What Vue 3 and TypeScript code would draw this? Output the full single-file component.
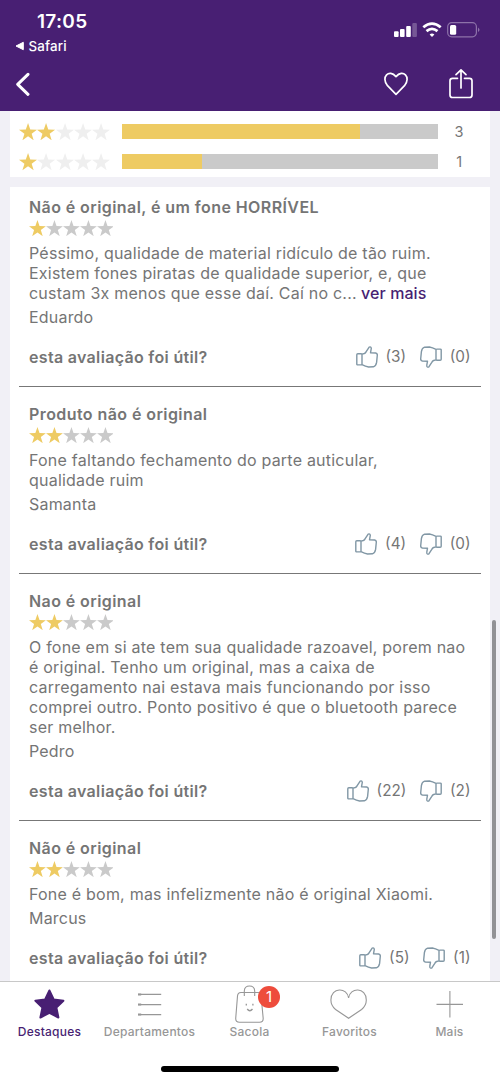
<script setup lang="ts">
interface Review {
  title: string
  stars: number
  lines: string[]
  more?: boolean
  author: string
  up: number
  down: number
}

const summary = [
  { stars: 2, percent: 75.2, count: 3 },
  { stars: 1, percent: 25.2, count: 1 },
]

const reviews: Review[] = [
  {
    title: 'Não é original, é um fone HORRÍVEL',
    stars: 1,
    lines: [
      'Péssimo, qualidade de material ridículo de tão ruim.',
      'Existem fones piratas de qualidade superior, e, que',
      'custam 3x menos que esse daí. Caí no c...',
    ],
    more: true,
    author: 'Eduardo',
    up: 3,
    down: 0,
  },
  {
    title: 'Produto não é original',
    stars: 2,
    lines: ['Fone faltando fechamento do parte auticular,', 'qualidade ruim'],
    author: 'Samanta',
    up: 4,
    down: 0,
  },
  {
    title: 'Nao é original',
    stars: 2,
    lines: [
      'O fone em si ate tem sua qualidade razoavel, porem nao',
      'é original. Tenho um original, mas a caixa de',
      'carregamento nai estava mais funcionando por isso',
      'comprei outro. Ponto positivo é que o bluetooth parece',
      'ser melhor.',
    ],
    author: 'Pedro',
    up: 22,
    down: 2,
  },
  {
    title: 'Não é original',
    stars: 2,
    lines: ['Fone é bom, mas infelizmente não é original Xiaomi.'],
    author: 'Marcus',
    up: 5,
    down: 1,
  },
]

const starPoints = '9,0 11.2,6.5 18,6.6 12.6,10.7 14.6,17.2 9,13.3 3.4,17.2 5.4,10.7 0,6.6 6.8,6.5'
const thumbPath =
  'M6 8.1 L8.3 7.5 Q9.5 7 10.2 5.6 L13 1.3 Q13.7 .5 14.8 1.2 Q15.5 1.7 15.2 2.8 L14.5 6.8 L19.7 7 Q21.5 7.3 21.3 9.3 L20.6 16.4 Q20.1 20 17.4 20.8 L12.6 21 Q9.5 20.5 6 18.6 M1.8 7.8 H5.2 Q6 7.8 6 8.7 V18 Q6 18.9 5.2 18.9 H1.8 Q.8 18.9 .8 18 V8.7 Q.8 7.8 1.8 7.8 Z'
</script>

<template>
  <div class="screen">
    <header class="header">
      <div class="status">
        <div class="clock">
          <div class="time">17:05</div>
          <div class="back-app">
            <svg width="9" height="10" viewBox="0 0 9 10"><path d="M1 5 L8.3 1.3 V8.7 Z" fill="#fff" stroke="#fff" stroke-linejoin="round" /></svg>
            <span>Safari</span>
          </div>
        </div>
        <svg class="signals" width="88" height="18" viewBox="0 0 88 18">
          <g fill="#fff">
            <rect x="1" y="9.3" width="4.6" height="5.7" rx="1" />
            <rect x="7" y="7" width="4.6" height="8" rx="1" />
            <rect x="13.2" y="4" width="4.6" height="11" rx="1" />
            <rect x="19.3" y="1" width="4.6" height="14" rx="1" opacity=".25" />
            <path d="M39 15 L36.6 12.4 Q39 10.4 41.4 12.4 Z" />
          </g>
          <path d="M30.3 5.3 Q39 -2 47.7 5.3 M33.5 9.1 Q39 4.6 44.5 9.1" fill="none" stroke="#fff" stroke-width="2.8" />
          <rect x="54.7" y=".7" width="28.7" height="14.1" rx="4" fill="none" stroke="#8d72a9" stroke-width="1.2" />
          <rect x="57" y="3" width="6.2" height="9.8" rx="1.5" fill="#fff" />
          <path d="M85 5.5 Q88 7.8 85 10 Z" fill="#8d72a9" />
        </svg>
      </div>
      <div class="actions">
        <svg width="16" height="24" viewBox="0 0 16 24"><path d="M13 2.3 L2.7 12.3 L13 22.3" fill="none" stroke="#fff" stroke-width="3" stroke-linecap="round" stroke-linejoin="round" /></svg>
        <div class="action-group">
          <svg width="26" height="24" viewBox="0 0 26 24"><path d="M13 22.3 L4.5 13.7 C-2.5 5 6.2 -3.5 13 4.6 C19.8 -3.5 28.5 5 21.5 13.7 Z" fill="none" stroke="#fff" stroke-width="1.7" stroke-linejoin="round" /></svg>
          <svg width="24" height="32" viewBox="0 0 24 32"><path d="M8.5 10.3 H3.5 Q1 10.3 1 12.8 V27 Q1 29.5 3.5 29.5 H20.5 Q23 29.5 23 27 V12.8 Q23 10.3 20.5 10.3 H15.5 M12 20 V2 M7 6.7 L12 1.8 L17 6.7" fill="none" stroke="#fff" stroke-width="1.7" stroke-linecap="round" stroke-linejoin="round" /></svg>
        </div>
      </div>
    </header>

    <main class="content">
      <section class="summary">
        <div v-for="row in summary" :key="row.stars" class="summary-row">
          <div class="stars large">
            <svg v-for="n in 5" :key="n" viewBox="0 0 18 17.2" :class="n <= row.stars ? 'on' : 'off'"><polygon :points="starPoints" /></svg>
          </div>
          <div class="bar"><div class="fill" :style="{ width: row.percent + '%' }"></div></div>
          <span class="count">{{ row.count }}</span>
        </div>
      </section>

      <section class="reviews">
        <article v-for="(r, i) in reviews" :key="i" class="review">
          <h2 class="title">{{ r.title }}</h2>
          <div class="stars small">
            <svg v-for="n in 5" :key="n" viewBox="0 0 18 17.2" :class="n <= r.stars ? 'on' : 'off'"><polygon :points="starPoints" /></svg>
          </div>
          <div v-for="(line, j) in r.lines" :key="j" class="line">
            <span>{{ line }}</span>
            <a v-if="r.more && j === r.lines.length - 1" class="more">ver mais</a>
          </div>
          <div class="author">{{ r.author }}</div>
          <div class="useful">
            <strong>esta avaliação foi útil?</strong>
            <div class="votes">
              <svg width="22" height="22" viewBox="0 0 22 22"><path :d="thumbPath" /></svg>
              <span>({{ r.up }})</span>
              <svg class="down" width="22" height="22" viewBox="0 0 22 22"><path :d="thumbPath" transform="rotate(180 11 11)" /></svg>
              <span>({{ r.down }})</span>
            </div>
          </div>
        </article>
      </section>
    </main>
    <div class="scrollbar"></div>

    <footer class="footer">
      <nav class="tabs">
        <div class="tab active">
          <svg width="50" height="40" viewBox="0 0 50 40"><path d="M24.4 8.5 L28.7 17.4 L38.4 18.8 L31.4 25.6 L33.4 35.5 L24.4 30.9 L15.4 35.5 L17.4 25.6 L10.4 18.8 L20.1 17.4 Z" fill="#481f73" stroke="#481f73" stroke-width="2" stroke-linejoin="round" /></svg>
          <span>Destaques</span>
        </div>
        <div class="tab">
          <svg width="50" height="40" viewBox="0 0 50 40"><path d="M13 12.4 H36.2 M13 22.6 H36.2 M13 32.6 H36.2" class="thin" /><path d="M13 12.4 H16.2 M13 22.6 H16.2 M13 32.6 H16.2" class="dot" /></svg>
          <span>Departamentos</span>
        </div>
        <div class="tab">
          <svg width="50" height="40" viewBox="0 0 50 40">
            <path d="M16 10.5 H33 Q35.8 10.5 36.1 14 L38.2 36.5 Q38.2 40.3 34.5 40.3 H14.5 Q10.7 40.3 10.7 36.5 L12.5 14 Q12.8 10.5 16 10.5 Z M19.3 14 V9 Q19.5 4 24.5 4 Q29.5 4 29.7 9 V14" class="thin" />
            <path d="M21.3 21.7 V23.5 M27.9 21.7 V23.5 M22.2 27 Q24.8 30.5 27.5 27" class="thin face" />
          </svg>
          <b class="badge">1</b>
          <span>Sacola</span>
        </div>
        <div class="tab">
          <svg width="50" height="40" viewBox="0 0 50 40"><path d="M23.6 16 C22.4 5 5.9 5 5.9 18 C5.9 22.7 7.6 25 10.6 27.5 L23.6 36.3 L36.6 27.5 C39.6 25 41.3 22.7 41.3 18 C41.3 5 24.8 5 23.6 16 Z" class="thin" /></svg>
          <span>Favoritos</span>
        </div>
        <div class="tab">
          <svg width="50" height="40" viewBox="0 0 50 40"><path d="M11.5 22.4 H38 M24.9 9 V35.6" class="thin" /></svg>
          <span>Mais</span>
        </div>
      </nav>
      <div class="home"></div>
    </footer>
  </div>
</template>

<style>
body { background: #f1f0f6; overflow: hidden; }
</style>

<style scoped>
.screen { position: relative; width: 500px; height: 1082px; display: flex; flex-direction: column; overflow: hidden; background: #f1f0f6; font-family: Inter, "Liberation Sans", sans-serif; color: #757575; }
.header { flex: none; box-sizing: border-box; height: 111px; background: #481f73; color: #fff; padding-top: 10px; }
.status { display: flex; justify-content: space-between; height: 50px; }
.clock { padding-left: 15px; }
.time { padding-left: 22px; font-weight: 600; font-size: 19px; letter-spacing: .3px; line-height: 24px; }
.back-app { display: flex; align-items: center; gap: 4.5px; font-size: 13.3px; font-weight: 500; letter-spacing: .2px; line-height: 24px; }
.signals { margin: 12px 19px 0 0; }
.actions { display: flex; align-items: center; justify-content: space-between; padding: 0 27px 0 15px; height: 48px; }
.action-group { display: flex; align-items: center; gap: 40px; }
.content { flex: 1; min-height: 0; overflow: hidden; padding: 0 10px; }
.summary { background: #fff; box-sizing: border-box; padding-top: 5.6px; height: 66px; margin-bottom: 9.5px; }
.summary-row { display: flex; align-items: center; height: 30.2px; }
.bar { width: 316.3px; height: 15px; margin-left: 12px; background: #cacaca; }
.fill { height: 100%; background: #eecb63; }
.count { flex: 1; text-align: center; font-size: 14.5px; padding-right: 10px; }
.stars { display: flex; }
.large { padding-left: 9.4px; }
.large svg { width: 18.1px; height: 17.3px; }
.small { height: 26px; align-items: center; padding-bottom: 3px; box-sizing: border-box; }
.small svg { width: 16.9px; height: 16.2px; }
.on { fill: #eecb63; }
.off { fill: #cacaca; }
.large .off { fill: #efefef; }
.reviews { background: #fff; padding: 0 9.5px 0 9px; }
.review { padding: 16.5px 10px 0; border-bottom: 1px solid #777; }
.review:first-child { padding-top: 10.2px; }
.title { margin: 0; font-size: 16px; font-weight: 600; letter-spacing: .42px; line-height: 20px; white-space: nowrap; }
.line { font-size: 16px; letter-spacing: .22px; line-height: 20px; white-space: nowrap; }
.more { color: #481f73; font-weight: 500; letter-spacing: .1px; margin-left: 4.2px; }
.author { font-size: 16px; letter-spacing: .2px; line-height: 20px; margin-top: 4px; }
.useful { display: flex; align-items: center; justify-content: space-between; height: 30px; margin: 15.6px 0 13.9px; }
.useful strong { font-size: 16px; font-weight: 600; letter-spacing: .32px; }
.votes { display: flex; align-items: center; gap: 7.8px; font-size: 15.3px; line-height: 20px; }
.votes .down { margin-left: 6px; }
.votes path { fill: none; stroke: #8197a5; stroke-width: 1.4; stroke-linejoin: round; }
.scrollbar { position: absolute; left: 492.4px; top: 619.5px; width: 4px; height: 319px; border-radius: 2px; background: #929296; }
.footer { flex: none; box-sizing: border-box; height: 101px; background: #fff; border-top: 1px solid #c8c8c8; display: flex; flex-direction: column; align-items: center; }
.tabs { display: flex; width: 500px; height: 84px; }
.tab { position: relative; width: 100px; display: flex; flex-direction: column; align-items: center; font-size: 12px; font-weight: 500; letter-spacing: .22px; color: #979797; box-sizing: border-box; padding-right: 1px; }
.tab svg { overflow: visible; display: block; }
.tab span { line-height: 20px; }
.tab.active { color: #481f73; }
.thin { fill: none; stroke: #979797; stroke-width: 1.1; }
.face { stroke-width: 1.3; }
.dot { fill: none; stroke: #979797; stroke-width: 2; }
.badge { position: absolute; left: 58px; top: 3.5px; width: 22px; height: 22px; border-radius: 50%; background: #ee4c3c; color: #fff; font-size: 15px; font-weight: 400; line-height: 22px; text-align: center; letter-spacing: 0; }
.home { width: 178px; height: 6px; border-radius: 3px; background: #000; }
</style>
